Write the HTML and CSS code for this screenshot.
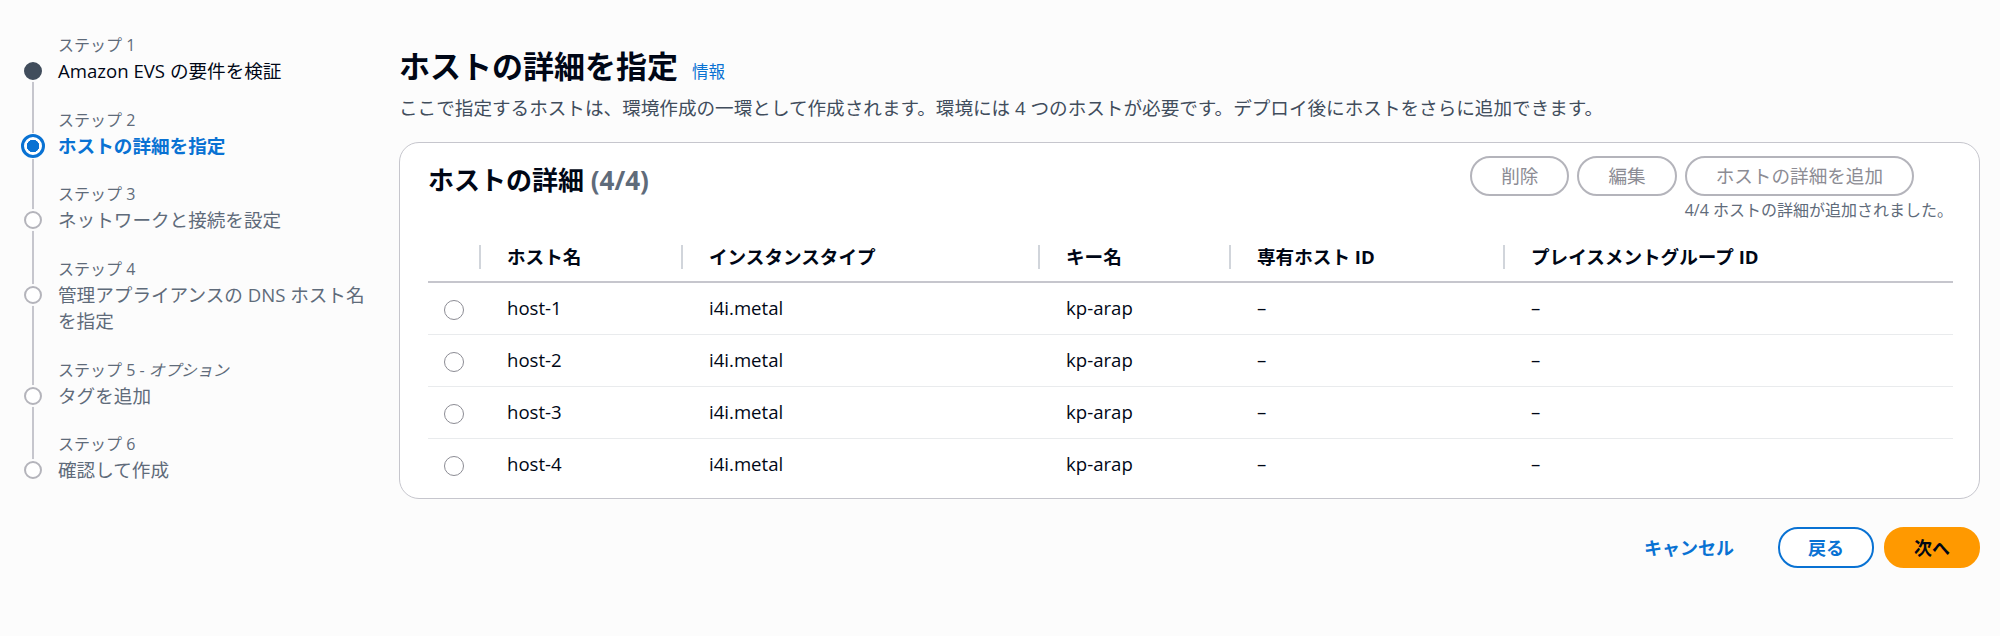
FILE: index.html
```html
<!DOCTYPE html>
<html lang="ja">
<head>
<meta charset="utf-8">
<title>ホストの詳細を指定</title>
<link rel="stylesheet" href="styles.css">
</head>
<body>
<div class="page">
  <nav class="steps">
    <div class="marker"></div>
    <div class="step-label first">ステップ 1</div>

    <div class="marker m-first"><span class="dot done"></span></div>
    <div class="step-title done">Amazon EVS の要件を検証</div>

    <div class="marker m-line"></div>
    <div class="step-label">ステップ 2</div>

    <div class="marker m-mid"><span class="dot active"></span></div>
    <div class="step-title active">ホストの詳細を指定</div>

    <div class="marker m-line"></div>
    <div class="step-label">ステップ 3</div>

    <div class="marker m-mid"><span class="dot"></span></div>
    <div class="step-title">ネットワークと接続を設定</div>

    <div class="marker m-line"></div>
    <div class="step-label">ステップ 4</div>

    <div class="marker m-mid"><span class="dot"></span></div>
    <div class="step-title">管理アプライアンスの DNS ホスト名を指定</div>

    <div class="marker m-line"></div>
    <div class="step-label">ステップ 5 - <i>オプション</i></div>

    <div class="marker m-mid"><span class="dot"></span></div>
    <div class="step-title">タグを追加</div>

    <div class="marker m-line"></div>
    <div class="step-label">ステップ 6</div>

    <div class="marker m-last"><span class="dot"></span></div>
    <div class="step-title">確認して作成</div>
  </nav>

  <main class="main">
    <h1 class="page-title">ホストの詳細を指定 <a class="info" href="#">情報</a></h1>
    <p class="desc">ここで指定するホストは、環境作成の一環として作成されます。環境には 4 つのホストが必要です。デプロイ後にホストをさらに追加できます。</p>

    <section class="card">
      <div class="card-head">
        <h2 class="card-title">ホストの詳細 <span class="counter">(4/4)</span></h2>
        <div class="actions">
          <button class="btn btn-disabled">削除</button>
          <button class="btn btn-disabled">編集</button>
          <div class="add-wrap">
            <button class="btn btn-disabled">ホストの詳細を追加</button>
            <div class="constraint">4/4 ホストの詳細が追加されました。</div>
          </div>
        </div>
      </div>

      <table class="hosts">
        <colgroup>
          <col class="c-sel"><col class="c-name"><col class="c-type"><col class="c-key"><col class="c-ded"><col>
        </colgroup>
        <thead>
          <tr><th></th><th>ホスト名</th><th>インスタンスタイプ</th><th>キー名</th><th>専有ホスト ID</th><th>プレイスメントグループ ID</th></tr>
        </thead>
        <tbody>
          <tr><td class="sel"><span class="radio"></span></td><td>host-1</td><td>i4i.metal</td><td>kp-arap</td><td>–</td><td>–</td></tr>
          <tr><td class="sel"><span class="radio"></span></td><td>host-2</td><td>i4i.metal</td><td>kp-arap</td><td>–</td><td>–</td></tr>
          <tr><td class="sel"><span class="radio"></span></td><td>host-3</td><td>i4i.metal</td><td>kp-arap</td><td>–</td><td>–</td></tr>
          <tr><td class="sel"><span class="radio"></span></td><td>host-4</td><td>i4i.metal</td><td>kp-arap</td><td>–</td><td>–</td></tr>
        </tbody>
      </table>
    </section>

    <div class="footer">
      <button class="btn btn-link">キャンセル</button>
      <button class="btn btn-normal">戻る</button>
      <button class="btn btn-primary">次へ</button>
    </div>
  </main>
</div>
</body>
</html>
```

FILE: styles.css
```css
* { box-sizing: border-box; }

html, body {
  margin: 0;
  padding: 0;
  background: #fcfcfc;
  color: #000716;
  font-family: "Open Sans", "Noto Sans CJK JP", sans-serif;
  font-size: 18.6px;
  line-height: 26px;
}

.page {
  display: flex;
  align-items: flex-start;
}

/* ---------- Wizard steps ---------- */
.steps {
  width: 370px;
  flex: none;
  padding: 35px 0 0 8px;
  display: grid;
  grid-template-columns: 50px 1fr;
}

.marker {
  display: flex;
  justify-content: center;
  align-items: flex-start;
  background-repeat: no-repeat;
  background-image: linear-gradient(#c6c6cd, #c6c6cd);
  background-size: 0 0;
}
.m-line { background-size: 2px 100%; background-position: center top; }
.m-mid  { background-size: 2px 100%; background-position: center top; }
.m-first { background-size: 2px calc(100% - 13px); background-position: center bottom; }
.m-last { background-size: 2px 13px; background-position: center top; }

.dot {
  display: block;
  width: 18px;
  height: 18px;
  margin-top: 4px;
  border-radius: 50%;
  border: 2.5px solid #b4b4bb;
  background: #ffffff;
  box-shadow: 0 0 0 2px #fcfcfc;
}
.dot.done {
  background: #414d5c;
  border-color: #414d5c;
}
.dot.active {
  width: 24px;
  height: 24px;
  margin-top: 1px;
  border: 3px solid #0972d3;
  background: radial-gradient(circle, #0972d3 0 6px, #ffffff 6.5px);
  box-shadow: 0 0 0 1px #fcfcfc;
}

.step-label {
  margin-top: 25px;
  margin-bottom: 3px;
  font-size: 16px;
  line-height: 20px;
  color: #5f6b7a;
}
.step-label.first { margin-top: 0; }
.step-label i { font-style: italic; }

.step-title {
  font-size: 18.6px;
  line-height: 26.5px;
  color: #5f6b7a;
}
.step-title.done { color: #000716; }
.step-title.active { color: #0972d3; font-weight: 700; }

/* ---------- Main ---------- */
.main {
  flex: 1;
  margin-left: 29px;
  padding: 47px 20px 0 0;
}

.page-title {
  margin: 0;
  font-size: 31px;
  line-height: 38px;
  font-weight: 700;
  color: #000716;
}
.info {
  margin-left: 6px;
  font-size: 16.5px;
  font-weight: 400;
  color: #0972d3;
  text-decoration: none;
}

.desc {
  margin: 4px 0 0;
  font-size: 18.6px;
  line-height: 26px;
  color: #414d5c;
}

.card {
  margin-top: 21px;
  background: #ffffff;
  border: 1px solid #c6c6cd;
  border-radius: 20px;
  padding: 13px 26px 8px 28px;
}

.card-head {
  display: flex;
  justify-content: space-between;
  align-items: flex-start;
}
.card-title {
  margin: 8px 0 0;
  font-size: 26px;
  line-height: 32px;
  font-weight: 700;
  color: #000716;
}
.counter {
  font-weight: 700;
  color: #5f6b7a;
}

.actions {
  display: flex;
  align-items: flex-start;
  gap: 8px;
}
.add-wrap {
  display: flex;
  flex-direction: column;
  align-items: flex-start;
  gap: 4px;
}
.constraint {
  font-size: 16px;
  line-height: 20px;
  color: #5f6b7a;
  white-space: nowrap;
}

.btn {
  display: inline-flex;
  align-items: center;
  justify-content: center;
  height: 40px;
  padding: 0 29px;
  border-radius: 20px;
  border: 2px solid transparent;
  background: transparent;
  font-family: inherit;
  font-size: 18.6px;
  line-height: 26px;
  white-space: nowrap;
  cursor: pointer;
}
.btn-disabled {
  border-color: #b4b4bb;
  color: #8c8c94;
  font-weight: 400;
  background: #ffffff;
}

/* ---------- Table ---------- */
.hosts {
  width: 100%;
  margin-top: 12px;
  border-collapse: collapse;
  table-layout: fixed;
}
.c-sel { width: 51px; }
.c-name { width: 202px; }
.c-type { width: 357px; }
.c-key { width: 191px; }
.c-ded { width: 274px; }

.hosts th {
  position: relative;
  height: 50px;
  padding: 0 0 0 28px;
  text-align: left;
  vertical-align: middle;
  font-weight: 700;
  font-size: 18.6px;
  color: #000716;
  border-bottom: 2px solid #c6c6cd;
  white-space: nowrap;
}
.hosts th + th::before {
  content: "";
  position: absolute;
  left: 0;
  top: 13px;
  width: 2px;
  height: 24px;
  background: #d1d5db;
}

.hosts td {
  height: 52px;
  padding: 0 0 0 28px;
  vertical-align: middle;
  font-size: 18.6px;
  color: #000716;
  border-bottom: 1px solid #e9ebed;
}
.hosts tbody tr:last-child td { border-bottom: none; }
.hosts td.sel {
  padding: 0;
  text-align: center;
}
.radio {
  display: inline-block;
  vertical-align: middle;
  width: 20px;
  height: 20px;
  border-radius: 50%;
  border: 1.5px solid #8c8c94;
  background: #ffffff;
}

/* ---------- Footer ---------- */
.footer {
  margin-top: 28px;
  display: flex;
  justify-content: flex-end;
  gap: 10px;
}
.footer .btn {
  height: 41px;
  font-size: 18px;
  font-weight: 700;
  padding: 0 28px;
}
.btn-link {
  color: #0972d3;
}
.footer .btn-link {
  padding: 0 32px;
}
.btn-normal {
  border-color: #0972d3;
  color: #0972d3;
  background: #ffffff;
}
.btn-primary {
  background: #ff9900;
  border-color: #ff9900;
  color: #000716;
}
```
